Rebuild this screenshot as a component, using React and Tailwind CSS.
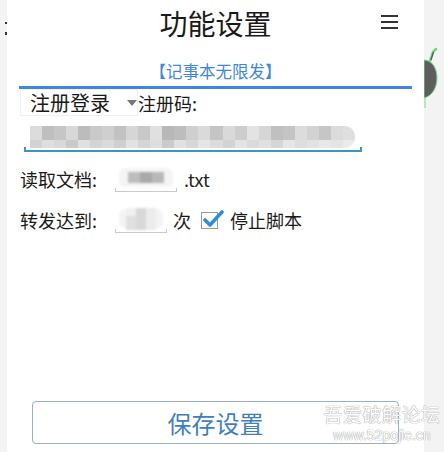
const topCells = [
  "bg-[#dcdcdc]", "bg-[#bfbfbf]", "bg-[#c6c6c6]", "bg-[#d8d8d8]", "bg-[#bcbcbc]", "bg-[#c9c9c9]",
  "bg-[#cfcfcf]", "bg-[#c2c2c2]", "bg-[#d6d6d6]", "bg-[#c8c8c8]", "bg-[#e0e0e0]", "bg-[#b8b8b8]",
  "bg-[#bdbdbd]", "bg-[#cfcfcf]", "bg-[#dadada]", "bg-[#c5c5c5]", "bg-[#d9d9d9]", "bg-[#cdcdcd]",
  "bg-[#e3e3e3]", "bg-[#d6d6d6]", "bg-[#c0c0c0]", "bg-[#c4c4c4]", "bg-[#dcdcdc]", "bg-[#d2d2d2]",
  "bg-[#c6c6c6]", "bg-[#dbdbdb]", "bg-[#dfdfdf]",
];
const botCells = [
  "bg-[#d2d2d2]", "bg-[#dedede]", "bg-[#d8d8d8]", "bg-[#c9c9c9]", "bg-[#e0e0e0]", "bg-[#d4d4d4]",
  "bg-[#dadada]", "bg-[#cfcfcf]", "bg-[#e2e2e2]", "bg-[#d5d5d5]", "bg-[#dedede]", "bg-[#cacaca]",
  "bg-[#e1e1e1]", "bg-[#d7d7d7]", "bg-[#e5e5e5]", "bg-[#dcdcdc]", "bg-[#d3d3d3]", "bg-[#e4e4e4]",
  "bg-[#dadada]", "bg-[#e0e0e0]", "bg-[#d6d6d6]", "bg-[#e6e6e6]", "bg-[#dddddd]", "bg-[#e2e2e2]",
  "bg-[#e8e8e8]", "bg-[#e4e4e4]", "bg-[#eaeaea]",
];

function Bracket({ className, color }) {
  return (
    <div className={"relative " + className}>
      <div className={"absolute left-0 right-0 bottom-0 h-[2px] " + color}></div>
      <div className={"absolute left-0 bottom-0 w-[2px] h-[5px] " + color}></div>
      <div className={"absolute right-0 bottom-0 w-[2px] h-[5px] " + color}></div>
    </div>
  );
}

function SmallInput({ width, children }) {
  return (
    <div className={"relative h-[26px] " + width}>
      <div className="absolute inset-x-[4px] top-[2px] bottom-[5px] rounded-[6px] bg-[#f4f4f4] blur-[1px] flex items-center justify-center">
        {children}
      </div>
      <div className="absolute left-0 right-0 bottom-0 h-[1px] bg-[#c9c9c9]"></div>
      <div className="absolute left-0 bottom-0 w-[1px] h-[4px] bg-[#c9c9c9]"></div>
      <div className="absolute right-0 bottom-0 w-[1px] h-[4px] bg-[#c9c9c9]"></div>
    </div>
  );
}

export default function App() {
  return (
    <div
      className="flex h-[452px] w-[444px] overflow-hidden bg-[#f3f3f3] text-[#1a1a1a]"
      style={{ fontFamily: '"Noto Sans CJK SC", "Noto Sans", sans-serif' }}
    >
      <div className="relative w-[7px] shrink-0">
        <div className="absolute left-[5px] top-[22px] w-[2px] h-[2px] bg-[#333]"></div>
        <div className="absolute left-[5px] top-[32px] w-[2px] h-[3px] bg-[#333]"></div>
      </div>

      <div className="relative flex w-[417px] shrink-0 flex-col bg-white">
        <header className="relative flex h-[45px] items-center justify-center">
          <span className="text-[28px] leading-none">功能设置</span>
          <div className="absolute right-[26px] top-[15px] flex w-[17px] flex-col gap-[4px]">
            <div className="h-[2px] bg-[#333]"></div>
            <div className="h-[2px] bg-[#333]"></div>
            <div className="h-[2px] bg-[#333]"></div>
          </div>
        </header>

        <div className="mt-[16px] text-center text-[16.5px] leading-[20px] text-[#3f88d6]">【记事本无限发】</div>
        <div className="mx-[12px] mt-[5px] h-[3px] bg-[#3f88e0]"></div>

        <div className="flex h-[27px] items-center">
          <div className="ml-[13px] flex h-[27px] w-[118px] items-center border border-[#f0f0f0] pl-[9px]">
            <span className="text-[20px] leading-none">注册登录</span>
            <svg width="10" height="6" viewBox="0 0 10 6" className="ml-[17px]">
              <path d="M0 0 L10 0 L5 6 Z" fill="#777" />
            </svg>
          </div>
          <span className="text-[18px] leading-none">注册码:</span>
        </div>

        <Bracket className="ml-[17px] mt-[9px] h-[27px] w-[338px]" color="bg-[#3d94c8]" />
        <div className="absolute left-[23px] top-[126px] h-[22px] w-[325px] overflow-hidden rounded-r-[10px] blur-[0.6px]">
          <div className="flex h-[14px]">
            {topCells.map((c, i) => (
              <div key={i} className={"h-full flex-1 " + c}></div>
            ))}
          </div>
          <div className="flex h-[8px]">
            {botCells.map((c, i) => (
              <div key={i} className={"h-full flex-1 " + c}></div>
            ))}
          </div>
        </div>

        <div className="mt-[14px] flex items-center pl-[13px]">
          <span className="w-[95px] text-[18px] leading-none">读取文档:</span>
          <SmallInput width="w-[62px]">
            <div className="flex h-[11px] w-[36px]">
              <div className="flex-1 bg-[#bdbdbd]"></div>
              <div className="flex-1 bg-[#a9a9a9]"></div>
              <div className="flex-1 bg-[#b9b9b9]"></div>
            </div>
          </SmallInput>
          <span className="ml-[7px] text-[18px] leading-none text-[#222]">.txt</span>
        </div>

        <div className="mt-[15px] flex items-center pl-[13px]">
          <span className="w-[95px] text-[18px] leading-none">转发达到:</span>
          <SmallInput width="w-[52px]">
            <div className="flex h-[22px] w-[30px]">
              <div className="flex-1 flex flex-col">
                <div className="h-[8px] bg-[#f0f0f0]"></div>
                <div className="flex-1 bg-[#e0e0e0]"></div>
              </div>
              <div className="flex-1 bg-[#d8d8d8]"></div>
              <div className="flex-1 bg-[#ececec]"></div>
            </div>
          </SmallInput>
          <span className="ml-[6px] text-[18px] leading-none">次</span>
          <div className="relative ml-[10px] h-[17px] w-[17px] border border-[#9a9a9a] bg-white">
            <svg width="22" height="20" viewBox="0 0 22 20" className="absolute left-[1px] top-[-4px]">
              <path d="M2 11 L7 16 L19 3" fill="none" stroke="#2f8ed6" strokeWidth="3.6" strokeLinecap="round" strokeLinejoin="round" />
            </svg>
          </div>
          <span className="ml-[12px] text-[18px] leading-none">停止脚本</span>
        </div>

        <div className="flex-1"></div>

        <button className="mx-[25px] mb-[8px] flex h-[43px] items-center justify-center rounded-[4px] border border-[#98b0c8] bg-white text-[24px] leading-none text-[#3f7fc0]">
          保存设置
        </button>

        <div className="absolute left-[316px] top-[402px] flex w-[118px] flex-col items-center text-white [text-shadow:0_0_1px_#9a9a9a,0_0_1px_#9a9a9a]">
          <span className="text-[19px] leading-[24px] tracking-[0.5px]">吾爱破解论坛</span>
          <span className="text-[14px] leading-[18px]" style={{ fontFamily: '"Liberation Sans", sans-serif' }}>www.52pojie.cn</span>
        </div>
      </div>

      <div className="relative w-[20px] shrink-0">
        <svg width="18" height="66" viewBox="0 0 18 66" className="absolute left-0 top-[46px]">
          <path d="M0 14 C8 14 13 22 13 32 C13 42 8 50 0 52 Z" fill="#5e5e5e" stroke="#7fd88a" strokeWidth="1" />
          <path d="M6 15 L9 6 L12 3" fill="none" stroke="#6fd47a" strokeWidth="2.5" strokeLinecap="round" />
          <path d="M7 14 L9.5 6" fill="none" stroke="#555" strokeWidth="1.2" />
          <path d="M1 52 L1 62" fill="none" stroke="#7fd88a" strokeWidth="1" />
        </svg>
      </div>
    </div>
  );
}
